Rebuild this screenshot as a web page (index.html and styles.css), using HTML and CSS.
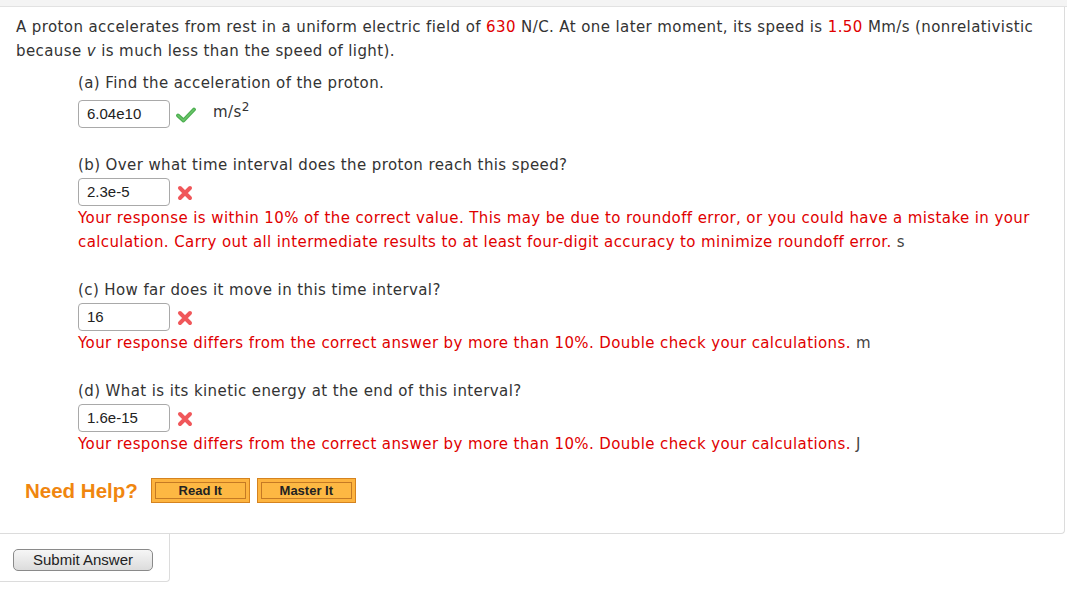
FILE: index.html
```html
<!DOCTYPE html>
<html>
<head>
<meta charset="utf-8">
<link rel="stylesheet" href="styles.css">
</head>
<body>
<div class="topstrip"></div>
<div class="card">
  <p class="intro">A proton accelerates from rest in a uniform electric field of <span class="red">630</span> N/C. At one later moment, its speed is <span class="red">1.50</span> Mm/s (nonrelativistic because <i>v</i> is much less than the speed of light).</p>

  <div class="part part-a">
    <div class="q">(a) Find the acceleration of the proton.</div>
    <div class="row row-a">
      <span class="box">6.04e10</span>
      <svg class="check" width="20" height="16" viewBox="0 0 20 16"><path d="M2 8.5 L7.5 13.5 L18 2.5" fill="none" stroke="#4caf50" stroke-width="3.8" stroke-linecap="round" stroke-linejoin="round"/><path d="M2 8.5 L7.5 13.5 L18 2.5" fill="none" stroke="#6cc46a" stroke-width="1.4" stroke-linecap="round" stroke-linejoin="round"/></svg>
      <span class="unit">m/s<sup>2</sup></span>
    </div>
  </div>

  <div class="part">
    <div class="q">(b) Over what time interval does the proton reach this speed?</div>
    <div class="row">
      <span class="box">2.3e-5</span>
      <svg class="cross" width="16" height="16" viewBox="0 0 16 16"><path d="M3 3 L13 13 M13 3 L3 13" stroke="#f0575a" stroke-width="4" stroke-linecap="round"/></svg>
    </div>
    <div class="fb">Your response is within 10% of the correct value. This may be due to roundoff error, or you could have a mistake in your calculation. Carry out all intermediate results to at least four-digit accuracy to minimize roundoff error. <span class="u">s</span></div>
  </div>

  <div class="part part-b">
    <div class="q">(c) How far does it move in this time interval?</div>
    <div class="row">
      <span class="box">16</span>
      <svg class="cross" width="16" height="16" viewBox="0 0 16 16"><path d="M3 3 L13 13 M13 3 L3 13" stroke="#f0575a" stroke-width="4" stroke-linecap="round"/></svg>
    </div>
    <div class="fb">Your response differs from the correct answer by more than 10%. Double check your calculations. <span class="u">m</span></div>
  </div>

  <div class="part part-c">
    <div class="q">(d) What is its kinetic energy at the end of this interval?</div>
    <div class="row">
      <span class="box">1.6e-15</span>
      <svg class="cross" width="16" height="16" viewBox="0 0 16 16"><path d="M3 3 L13 13 M13 3 L3 13" stroke="#f0575a" stroke-width="4" stroke-linecap="round"/></svg>
    </div>
    <div class="fb">Your response differs from the correct answer by more than 10%. Double check your calculations. <span class="u">J</span></div>
  </div>

  <div class="help">
    <span class="need">Need Help?</span>
    <span class="hbtn"><span class="hin">Read It</span></span>
    <span class="hbtn"><span class="hin">Master It</span></span>
  </div>
</div>
<div class="submit-box">
  <button class="submit">Submit Answer</button>
</div>
</body>
</html>
```

FILE: styles.css
```css
html, body {
  margin: 0;
  padding: 0;
  background: #fff;
}
body {
  font-family: "DejaVu Sans", Verdana, sans-serif;
  font-size: 15px;
  letter-spacing: 0.4px;
  color: #333;
}
.topstrip {
  height: 6px;
  background: #f4f4f4;
  border-bottom: 1px solid #e2e2e2;
}
.card {
  width: 1065px;
  box-sizing: border-box;
  border-right: 1px solid #dcdcdc;
  border-bottom: 1px solid #dcdcdc;
  border-bottom-right-radius: 4px;
  padding: 8px 0 30px 16px;
}
.intro {
  margin: 0 0 8px 0;
  line-height: 24px;
  padding-right: 20px;
}
.red { color: #e00000; }
.part {
  margin-left: 62px;
  margin-bottom: 24px;
}
.part-a {
  margin-bottom: 25px;
}
.part-b {
  margin-bottom: 25px;
}
.part-c {
  margin-top: -1px;
  margin-bottom: 22px;
}
.q {
  line-height: 24px;
}
.row {
  display: flex;
  align-items: center;
  height: 28px;
  margin-top: 1px;
  letter-spacing: 0;
}
.row-a {
  margin-top: 5px;
}
.box {
  box-sizing: border-box;
  width: 92px;
  height: 28px;
  border: 1px solid #a9a9a9;
  border-radius: 4px;
  font-family: "Liberation Sans", Arial, sans-serif;
  font-size: 15px;
  color: #222;
  line-height: 26px;
  padding-left: 8px;
}
.check {
  margin-left: 6px;
  margin-top: 2px;
}
.cross {
  margin-left: 7px;
  margin-top: 2px;
}
.unit {
  margin-left: 17px;
  margin-top: -4px;
  letter-spacing: 0.4px;
}
.unit sup {
  font-size: 12px;
  line-height: 0;
}
.fb {
  color: #e00000;
  line-height: 24px;
  margin-right: 20px;
}
.fb .u { color: #444; }
.help {
  display: flex;
  align-items: center;
  margin-left: 9px;
  height: 25px;
  letter-spacing: 0;
}
.need {
  font-family: "Liberation Sans", Arial, sans-serif;
  font-weight: bold;
  font-size: 20.5px;
  color: #f0860f;
  margin-right: 13px;
}
.hbtn {
  display: inline-block;
  box-sizing: border-box;
  width: 99px;
  height: 25px;
  background: #fdb43f;
  border: 1px solid #d5831f;
  padding: 3px;
  margin-right: 7px;
}
.hin {
  display: block;
  box-sizing: border-box;
  height: 17px;
  border: 1px solid #c57a24;
  background: #fdb843;
  text-align: center;
  font-family: "Liberation Sans", Arial, sans-serif;
  font-weight: bold;
  font-size: 13px;
  line-height: 15px;
  color: #222;
}
.submit-box {
  width: 170px;
  box-sizing: border-box;
  border-right: 1px solid #dcdcdc;
  border-bottom: 1px solid #dcdcdc;
  border-bottom-right-radius: 4px;
  padding: 15px 0 10px 13px;
  letter-spacing: 0;
}
.submit {
  width: 140px;
  height: 22px;
  border: 1px solid #8a8a8a;
  border-radius: 5px;
  background: linear-gradient(#f6f6f6, #dcdcdc);
  font-family: "Liberation Sans", Arial, sans-serif;
  font-size: 15px;
  color: #222;
  padding: 0;
  line-height: 20px;
}
```
